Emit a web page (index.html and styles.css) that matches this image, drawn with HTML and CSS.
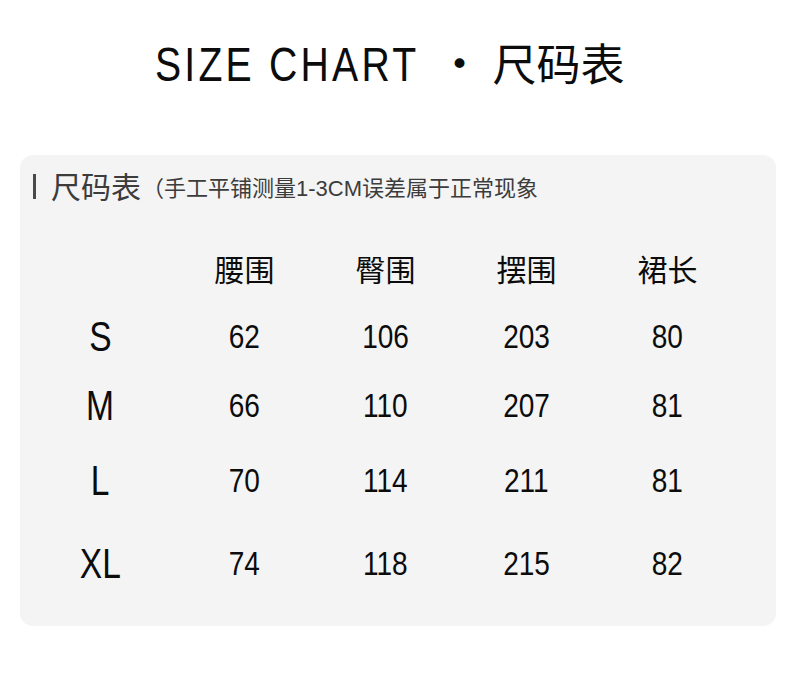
FILE: index.html
```html
<!DOCTYPE html>
<html lang="zh">
<head>
<meta charset="utf-8">
<title>Size Chart</title>
<link rel="stylesheet" href="styles.css">
</head>
<body>
<div class="page">
  <h1 class="title"><span class="title-en">SIZE CHART</span><span class="title-dot">•</span><span class="title-cn">尺码表</span></h1>
  <section class="card">
    <div class="card-head">
      <span class="bar"></span>
      <span class="head-main">尺码表</span>
      <span class="head-note">（手工平铺测量<span class="latin">1-3CM</span>误差属于正常现象</span>
    </div>
    <div class="table">
      <div class="cell"></div>
      <div class="cell th">腰围</div>
      <div class="cell th">臀围</div>
      <div class="cell th">摆围</div>
      <div class="cell th">裙长</div>

      <div class="cell size"><span>S</span></div>
      <div class="cell num"><span>62</span></div>
      <div class="cell num"><span>106</span></div>
      <div class="cell num"><span>203</span></div>
      <div class="cell num"><span>80</span></div>

      <div class="cell size"><span>M</span></div>
      <div class="cell num"><span>66</span></div>
      <div class="cell num"><span>110</span></div>
      <div class="cell num"><span>207</span></div>
      <div class="cell num"><span>81</span></div>

      <div class="cell size"><span>L</span></div>
      <div class="cell num"><span>70</span></div>
      <div class="cell num"><span>114</span></div>
      <div class="cell num"><span>211</span></div>
      <div class="cell num"><span>81</span></div>

      <div class="cell size"><span>XL</span></div>
      <div class="cell num"><span>74</span></div>
      <div class="cell num"><span>118</span></div>
      <div class="cell num"><span>215</span></div>
      <div class="cell num"><span>82</span></div>
    </div>
  </section>
</div>
</body>
</html>
```
FILE: styles.css
```css
html, body {
  margin: 0;
  padding: 0;
  background: #ffffff;
}
.page {
  width: 800px;
  height: 688px;
  padding-top: 28px;
  box-sizing: border-box;
  font-family: "Liberation Sans", "Noto Sans CJK SC", sans-serif;
  color: #111;
}
.title {
  margin: 0;
  height: 72px;
  display: flex;
  align-items: center;
  justify-content: flex-start;
  padding-left: 155px;
  font-weight: normal;
  white-space: nowrap;
  color: #0c0c0c;
}
.title-en {
  display: inline-block;
  font-family: "Liberation Sans", sans-serif;
  font-size: 49px;
  letter-spacing: 4px;
  line-height: 72px;
  transform: scaleX(0.8);
  transform-origin: left center;
  margin-right: -66px;
}
.title-dot {
  font-family: "DejaVu Sans", sans-serif;
  font-size: 34px;
  line-height: 72px;
  margin-left: 30px;
  margin-right: 23px;
}
.title-cn {
  font-family: "Noto Sans CJK SC", sans-serif;
  font-size: 44px;
  line-height: 72px;
  margin-bottom: 4px;
}
.card {
  margin: 55px 24px 0 20px;
  height: 471px;
  box-sizing: border-box;
  background: #f4f4f4;
  border-radius: 13px;
  padding: 12px 0 0 0;
}
.card-head {
  display: flex;
  align-items: center;
  height: 36px;
  padding-left: 13px;
  color: #3c3c3c;
  font-family: "Noto Sans CJK SC", sans-serif;
  white-space: nowrap;
}
.bar {
  width: 3px;
  height: 25px;
  background: #4a4a4a;
  margin-right: 15px;
  margin-top: 2px;
}
.head-main {
  font-size: 30px;
  line-height: 36px;
}
.head-note {
  font-size: 22px;
  line-height: 36px;
  margin-left: 1px;
  margin-top: 4px;
  font-family: "Noto Sans CJK SC", sans-serif;
}
.latin {
  font-family: "Liberation Sans", sans-serif;
}
.table {
  margin-top: 30px;
  margin-left: 6px;
  display: grid;
  grid-template-columns: 148px repeat(4, 141px);
  grid-template-rows: 69px 69px 69px 81px 85px;
}
.cell {
  display: flex;
  align-items: center;
  justify-content: center;
  color: #0c0c0c;
}
.cell span {
  display: inline-block;
}
.th {
  font-family: "Noto Sans CJK SC", sans-serif;
  font-size: 30px;
}
.num {
  font-family: "Liberation Sans", sans-serif;
  font-size: 33px;
}
.num span {
  transform: scaleX(0.85);
}
.size {
  font-family: "Liberation Sans", sans-serif;
  font-size: 43px;
}
.size span {
  transform: scaleX(0.78);
}
```
